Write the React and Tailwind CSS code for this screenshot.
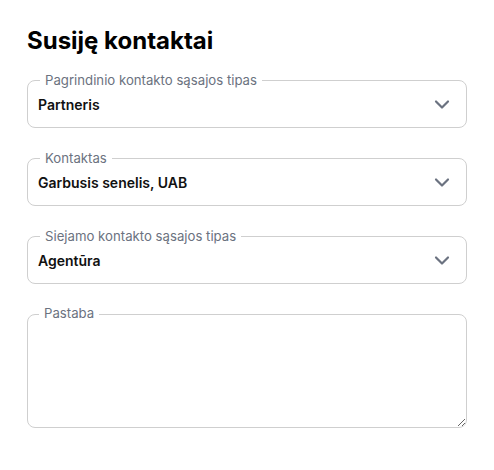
import React from 'react';

const Chevron = () => (
  <svg width="24" height="24" viewBox="0 0 24 24" fill="none" stroke="#6b7280" strokeWidth="2.2" strokeLinecap="round" strokeLinejoin="round">
    <path d="M6 9.5l6 6 6-6" />
  </svg>
);

const SelectField = ({ label, value }) => (
  <div className="relative h-[48px] rounded-lg border border-[#cfcfcf] flex items-center pl-[10px] pr-[12px]">
    <span className="absolute -top-[9px] left-[12px] bg-white px-[5px] text-[13.2px] leading-[16px] text-[#6b7280]">
      {label}
    </span>
    <span className="flex-1 text-[14px] font-semibold text-[#111]">{value}</span>
    <Chevron />
  </div>
);

export default function App() {
  return (
    <div className="bg-white min-h-[470px] px-[27px] pt-[26px]" style={{ fontFamily: 'Inter, "Noto Sans", sans-serif' }}>
      <h1 className="text-[24px] font-bold text-black leading-[30px] mb-[24px]">Susiję kontaktai</h1>
      <div className="flex flex-col gap-[30px]">
        <SelectField label="Pagrindinio kontakto sąsajos tipas" value="Partneris" />
        <SelectField label="Kontaktas" value="Garbusis senelis, UAB" />
        <SelectField label="Siejamo kontakto sąsajos tipas" value="Agentūra" />
        <div className="relative">
          <span className="absolute -top-[9px] left-[12px] bg-white px-[5px] text-[13.2px] leading-[16px] text-[#6b7280] z-10">
            Pastaba
          </span>
          <textarea className="block w-full h-[114px] rounded-lg border border-[#cfcfcf] outline-none px-[10px] py-[10px] text-[14px]" />
        </div>
      </div>
    </div>
  );
}
